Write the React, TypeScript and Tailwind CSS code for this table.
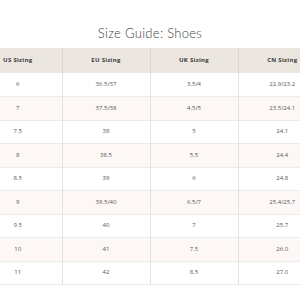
const rows = [
  ['6', '36.5/37', '3.5/4', '22.9/23.2'],
  ['7', '37.5/38', '4.5/5', '23.5/24.1'],
  ['7.5', '38', '5', '24.1'],
  ['8', '38.5', '5.5', '24.4'],
  ['8.5', '39', '6', '24.8'],
  ['9', '39.5/40', '6.5/7', '25.4/25.7'],
  ['9.5', '40', '7', '25.7'],
  ['10', '41', '7.5', '26.0'],
  ['11', '42', '8.5', '27.0'],
]

const heads = ['US Sizing', 'EU Sizing', 'UK Sizing', 'CN Sizing']

export default function App() {
  return (
    <div className="w-[300px] h-[300px] overflow-hidden bg-white font-['Open_Sans','Lato',sans-serif]">
      <h1 className="pt-[24px] h-[48px] text-center text-[13px] leading-[18px] text-[#444] font-light tracking-[0.3px] font-['Lato',sans-serif]">
        Size Guide: Shoes
      </h1>
      <div className="flex justify-center">
        <table className="w-[352px] shrink-0 table-fixed border-collapse">
          <thead>
            <tr className="h-[25px] bg-[#ece6e0]">
              {heads.map((h, i) => (
                <th
                  key={h}
                  className={[
                    'text-[6px] font-bold text-[#3a3a3a] tracking-[0.3px] text-center p-0',
                    i > 0 ? 'border-l border-[#ddd6cf]' : '',
                  ].join(' ')}
                >
                  {h}
                </th>
              ))}
            </tr>
          </thead>
          <tbody>
            {rows.map((r, ri) => (
              <tr
                key={ri}
                className={[
                  'h-[23.5px] border-b border-[#ebebeb]',
                  ri % 2 === 1 ? 'bg-[#fdf8f6]' : 'bg-white',
                ].join(' ')}
              >
                {r.map((c, ci) => (
                  <td
                    key={ci}
                    className={[
                      'text-[6px] text-[#555] text-center p-0',
                      ci > 0 ? 'border-l border-[#e3e3e3]' : '',
                    ].join(' ')}
                  >
                    {c}
                  </td>
                ))}
              </tr>
            ))}
          </tbody>
        </table>
      </div>
    </div>
  )
}
